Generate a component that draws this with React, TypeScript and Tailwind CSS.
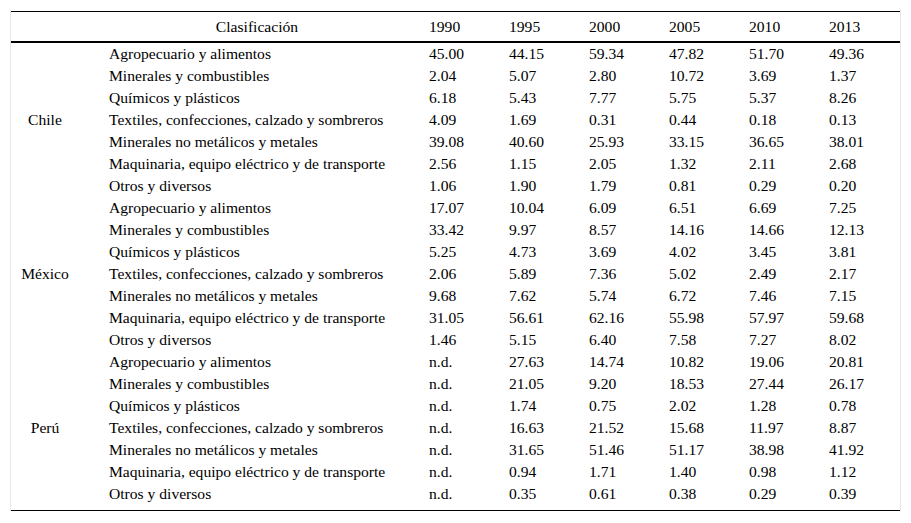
const categories = [
  "Agropecuario y alimentos",
  "Minerales y combustibles",
  "Químicos y plásticos",
  "Textiles, confecciones, calzado y sombreros",
  "Minerales no metálicos y metales",
  "Maquinaria, equipo eléctrico y de transporte",
  "Otros y diversos",
];

const years = ["1990", "1995", "2000", "2005", "2010", "2013"];

const countries: { name: string; rows: string[][] }[] = [
  {
    name: "Chile",
    rows: [
      ["45.00", "44.15", "59.34", "47.82", "51.70", "49.36"],
      ["2.04", "5.07", "2.80", "10.72", "3.69", "1.37"],
      ["6.18", "5.43", "7.77", "5.75", "5.37", "8.26"],
      ["4.09", "1.69", "0.31", "0.44", "0.18", "0.13"],
      ["39.08", "40.60", "25.93", "33.15", "36.65", "38.01"],
      ["2.56", "1.15", "2.05", "1.32", "2.11", "2.68"],
      ["1.06", "1.90", "1.79", "0.81", "0.29", "0.20"],
    ],
  },
  {
    name: "México",
    rows: [
      ["17.07", "10.04", "6.09", "6.51", "6.69", "7.25"],
      ["33.42", "9.97", "8.57", "14.16", "14.66", "12.13"],
      ["5.25", "4.73", "3.69", "4.02", "3.45", "3.81"],
      ["2.06", "5.89", "7.36", "5.02", "2.49", "2.17"],
      ["9.68", "7.62", "5.74", "6.72", "7.46", "7.15"],
      ["31.05", "56.61", "62.16", "55.98", "57.97", "59.68"],
      ["1.46", "5.15", "6.40", "7.58", "7.27", "8.02"],
    ],
  },
  {
    name: "Perú",
    rows: [
      ["n.d.", "27.63", "14.74", "10.82", "19.06", "20.81"],
      ["n.d.", "21.05", "9.20", "18.53", "27.44", "26.17"],
      ["n.d.", "1.74", "0.75", "2.02", "1.28", "0.78"],
      ["n.d.", "16.63", "21.52", "15.68", "11.97", "8.87"],
      ["n.d.", "31.65", "51.46", "51.17", "38.98", "41.92"],
      ["n.d.", "0.94", "1.71", "1.40", "0.98", "1.12"],
      ["n.d.", "0.35", "0.61", "0.38", "0.29", "0.39"],
    ],
  },
];

export default function App() {
  return (
    <div className="min-h-[523px] bg-white pt-[10px] pl-[10px] font-['Liberation_Serif','Times_New_Roman',serif] text-[15.6px] leading-[22px] text-black">
      <div className="w-[891px] border-x border-[#e6e6e6] pt-px">
        <div className="border-t border-b border-black pb-[5px]">
          <table className="w-[889px] table-fixed border-collapse">
            <colgroup>
              <col className="w-[68px]" />
              <col className="w-[340px]" />
              <col className="w-[80px]" />
              <col className="w-[80px]" />
              <col className="w-[80px]" />
              <col className="w-[80px]" />
              <col className="w-[80px]" />
              <col className="w-[81px]" />
            </colgroup>
            <thead>
              <tr className="h-[30px] border-b-2 border-black">
                <th className="p-0 font-normal" />
                <th className="pl-[30px] pr-[14px] text-center font-normal">Clasificación</th>
                {years.map((y) => (
                  <th key={y} className="pl-[10px] text-left font-normal">
                    {y}
                  </th>
                ))}
              </tr>
            </thead>
            <tbody>
              {countries.map((c) =>
                c.rows.map((vals, i) => (
                  <tr key={c.name + i} className="h-[22px]">
                    {i === 0 && (
                      <td rowSpan={7} className="p-0 text-center align-middle">
                        {c.name}
                      </td>
                    )}
                    <td className="p-0 pl-[30px] whitespace-nowrap">{categories[i]}</td>
                    {vals.map((v, j) => (
                      <td key={j} className="p-0 pl-[10px]">
                        {v}
                      </td>
                    ))}
                  </tr>
                ))
              )}
            </tbody>
          </table>
        </div>
      </div>
    </div>
  );
}
